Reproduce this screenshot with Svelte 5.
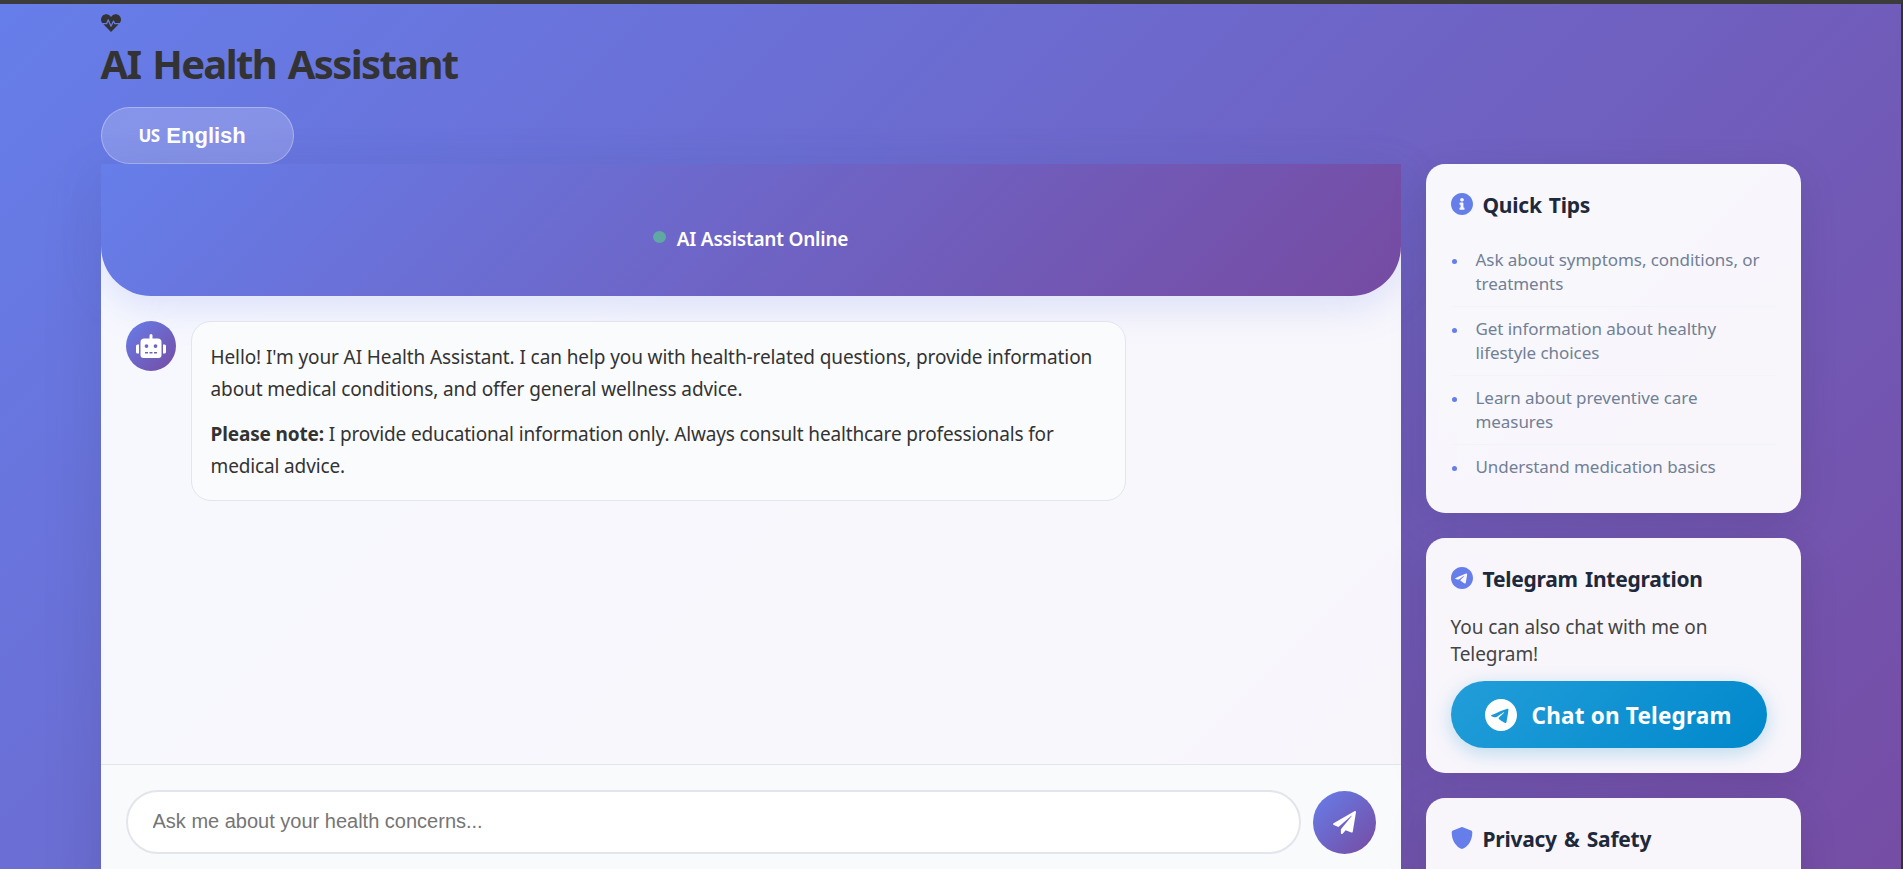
<script lang="ts">
  const ICONS = {
    heartbeat: {
      box: '0 0 512 512',
      d: 'M320.2 243.8l-49.7 99.4c-6 12.1-23.4 11.7-28.9-.6l-56.9-126.3-30 71.7H60.6l182.5 186.5c7.1 7.3 18.6 7.3 25.7 0L451.4 288H342.3l-22.1-44.2zM473.7 73.9l-2.4-2.5c-51.5-52.6-135.8-52.6-187.4 0L256 100l-27.9-28.5c-51.5-52.7-135.9-52.7-187.4 0l-2.4 2.4C-10.4 123.7-12.5 203 31 256h102.4l35.9-86.2c5.4-12.9 23.6-13.1 29.2-.4l58.2 129.3 49-97.9c5.9-11.8 22.7-11.8 28.6 0l27.6 55.2H481c43.5-53 41.4-132.3-7.3-182.1z',
    },
    robot: {
      box: '0 0 640 512',
      d: 'M32 224H64V416H32A32 32 0 0 1 0 384V256A32 32 0 0 1 32 224Zm512-48V448a64 64 0 0 1-64 64H160a64 64 0 0 1-64-64V176a80 80 0 0 1 80-80H288V32a32 32 0 0 1 64 0V96H464A80 80 0 0 1 544 176ZM264 256a40 40 0 1 0-40 40A40 40 0 0 0 264 256Zm-8 128H192v32h64Zm96 0H288v32h64ZM456 256a40 40 0 1 0-40 40A40 40 0 0 0 456 256Zm-8 128H384v32h64ZM640 256V384a32 32 0 0 1-32 32H576V224h32A32 32 0 0 1 640 256Z',
    },
    plane: {
      box: '0 0 512 512',
      d: 'M476 3.2L12.5 270.6c-18.1 10.4-15.8 35.6 2.2 43.2L121 358.4l287.3-253.2c5.5-4.9 13.3 2.6 8.6 8.3L176 407v80.5c0 23.6 28.5 32.9 42.5 15.8L282 426l124.6 52.2c14.2 6 30.4-2.9 33-18.2l72-432C515 7.8 493.3-6.8 476 3.2z',
    },
    info: {
      box: '8 8 496 496',
      d: 'M256 8C119.043 8 8 119.083 8 256c0 136.997 111.043 248 248 248s248-111.003 248-248C504 119.083 392.957 8 256 8zm0 110c23.196 0 42 18.804 42 42s-18.804 42-42 42-42-18.804-42-42 18.804-42 42-42zm56 254c0 6.627-5.373 12-12 12h-88c-6.627 0-12-5.373-12-12v-24c0-6.627 5.373-12 12-12h12v-64h-12c-6.627 0-12-5.373-12-12v-24c0-6.627 5.373-12 12-12h64c6.627 0 12 5.373 12 12v100h12c6.627 0 12 5.373 12 12v24z',
    },
    telegram: {
      box: '0 8 496 496',
      d: 'M248 8C111.033 8 0 119.033 0 256S111.033 504 248 504 496 392.967 496 256 384.967 8 248 8ZM362.952 176.66c-3.732 39.215-19.881 134.378-28.1 178.3-3.476 18.584-10.322 24.816-16.948 25.425-14.4 1.326-25.338-9.517-39.287-18.661-21.827-14.308-34.158-23.215-55.346-37.177-24.485-16.135-8.612-25 5.342-39.5 3.652-3.793 67.107-61.51 68.335-66.746.153-.655.3-3.1-1.154-4.384s-3.59-.849-5.135-.5q-3.283.746-104.608 69.142-14.845 10.194-26.894 9.934c-8.855-.191-25.888-5.006-38.551-9.123-15.531-5.048-27.875-7.717-26.8-16.291q.84-6.7 18.45-13.7 108.446-47.248 144.628-62.3c68.872-28.647 83.183-33.623 92.511-33.789 2.052-.034 6.639.474 9.61 2.885a10.452 10.452 0 0 1 3.53 6.716A43.765 43.765 0 0 1 362.952 176.66Z',
    },
    shield: {
      box: '8 0 496 512',
      d: 'M466.5 83.7l-192-80a48.15 48.15 0 0 0-36.9 0l-192 80C27.7 91.1 16 108.6 16 128c0 198.5 114.5 335.7 221.5 380.3 11.8 4.9 25.1 4.9 36.9 0C360.1 472.6 496 349.3 496 128c0-19.4-11.7-36.9-29.5-44.3z',
    },
  };

  const tips = [
    'Ask about symptoms, conditions, or treatments',
    'Get information about healthy lifestyle choices',
    'Learn about preventive care measures',
    'Understand medication basics',
  ];

  let message = $state('');
</script>

{#snippet icon(name: keyof typeof ICONS)}
  <svg class="icon {name}" viewBox={ICONS[name].box} aria-hidden="true">
    <path d={ICONS[name].d} />
  </svg>
{/snippet}

<div class="page">
  <div class="container">
    <header>
      {@render icon('heartbeat')}
      <h1>AI Health Assistant</h1>
      <button class="language"><span class="flag">US</span> English</button>
    </header>

    <div class="main">
      <section class="chat">
        <div class="chat-header">
          <span class="dot"></span>
          <span class="status">AI Assistant Online</span>
        </div>

        <div class="messages">
          <div class="avatar">{@render icon('robot')}</div>
          <div class="bubble">
            <p>
              Hello! I'm your AI Health Assistant. I can help you with health-related questions, provide information
              about medical conditions, and offer general wellness advice.
            </p>
            <p class="note">
              <strong>Please note:</strong> I provide educational information only. Always consult healthcare professionals for
              medical advice.
            </p>
          </div>
        </div>

        <div class="composer">
          <input type="text" placeholder="Ask me about your health concerns..." bind:value={message} />
          <button class="send" aria-label="Send">{@render icon('plane')}</button>
        </div>
      </section>

      <aside>
        <div class="card">
          <h3>{@render icon('info')}<span>Quick Tips</span></h3>
          <ul>
            {#each tips as tip}
              <li>{tip}</li>
            {/each}
          </ul>
        </div>

        <div class="card">
          <h3>{@render icon('telegram')}<span>Telegram Integration</span></h3>
          <p class="invite">You can also chat with me on Telegram!</p>
          <button class="telegram-link">{@render icon('telegram')}<span>Chat on Telegram</span></button>
        </div>

        <div class="card">
          <h3>{@render icon('shield')}<span>Privacy &amp; Safety</span></h3>
        </div>
      </aside>
    </div>
  </div>
</div>

<style>
  :global(body) {
    margin: 0;
    overflow: hidden;
  }

  .page {
    box-sizing: border-box;
    height: 869px;
    overflow: hidden;
    border-top: 4px solid #3c3c3c;
    border-right: 2px solid #333;
    background: linear-gradient(135deg, #667eea 0%, #764ba2 100%) 0 0 / 100% 960px no-repeat;
    color: #333;
    font-family: 'Segoe UI', 'Noto Sans', sans-serif;
    font-size: 19px;
  }

  .container {
    width: 1700px;
    margin: 0 auto;
    padding-top: 9px;
  }

  h1,
  h3,
  p,
  ul {
    margin: 0;
    padding: 0;
  }

  button {
    border: none;
    color: #fff;
    cursor: pointer;
  }

  .icon {
    display: block;
    flex-shrink: 0;
    fill: currentColor;
  }

  header {
    height: 151px;
  }

  .heartbeat {
    width: 20px;
    height: 20px;
  }

  h1 {
    margin-top: 4px;
    font-size: 40px;
    line-height: 54px;
    letter-spacing: -1.65px;
    word-spacing: 3px;
    font-weight: 700;
    white-space: nowrap;
  }

  .language {
    display: flex;
    align-items: center;
    gap: 7px;
    box-sizing: border-box;
    width: 193px;
    height: 57px;
    margin-top: 16px;
    padding: 0 37px;
    border: 1px solid rgba(255, 255, 255, 0.3);
    border-radius: 29px;
    background: rgba(255, 255, 255, 0.2);
    font-family: 'Liberation Sans', Arial, sans-serif;
    font-size: 22px;
    font-weight: 700;
  }

  .flag {
    font-family: 'Noto Sans', sans-serif;
    font-size: 17px;
    line-height: 20px;
    letter-spacing: -0.7px;
    font-weight: 700;
  }

  .main {
    display: grid;
    grid-template-columns: 1300px 375px;
    gap: 25px;
  }

  .chat {
    display: flex;
    flex-direction: column;
    height: 760px;
    background: rgba(255, 255, 255, 0.95);
    box-shadow: 0 20px 60px rgba(0, 0, 0, 0.1);
  }

  .chat-header {
    display: flex;
    align-items: center;
    justify-content: center;
    gap: 11px;
    box-sizing: border-box;
    height: 132px;
    padding-top: 18px;
    border-radius: 0 0 50px 50px;
    background: linear-gradient(135deg, #667eea 0%, #764ba2 100%);
    box-shadow: 0 10px 40px rgba(102, 126, 234, 0.2);
    color: #fff;
    font-weight: 600;
    letter-spacing: -0.22px;
  }

  .dot {
    width: 13px;
    height: 12px;
    margin-bottom: 4px;
    border-radius: 50%;
    background: #5fa8a4;
  }

  .messages {
    display: flex;
    align-items: flex-start;
    gap: 15px;
    box-sizing: border-box;
    height: 468px;
    padding: 25px;
  }

  .avatar,
  .send {
    display: flex;
    align-items: center;
    justify-content: center;
    flex-shrink: 0;
    border-radius: 50%;
    background: linear-gradient(135deg, #667eea, #764ba2);
    color: #fff;
  }

  .avatar {
    width: 50px;
    height: 50px;
  }

  .robot {
    width: 30px;
    height: 24px;
  }

  .bubble {
    box-sizing: border-box;
    width: 935px;
    padding: 19px 18px 18px 19px;
    border: 1px solid #e2e5eb;
    border-radius: 20px;
    background: #fafbfd;
    line-height: 32px;
    letter-spacing: -0.1px;
  }

  .note {
    margin-top: 13px;
    letter-spacing: -0.14px;
  }

  .composer {
    display: flex;
    gap: 12px;
    padding: 25px;
    border-top: 1px solid #e2e5eb;
    background: #f9fafc;
  }

  input {
    box-sizing: border-box;
    width: 1175px;
    height: 64px;
    padding: 0 25px 2px;
    border: 2px solid #e2e5eb;
    border-radius: 32px;
    outline: none;
    background: #fff;
    font-family: 'Liberation Sans', Arial, sans-serif;
    font-size: 20px;
  }

  input::placeholder {
    color: #757575;
  }

  .send {
    width: 63px;
    height: 63px;
    margin-top: 1px;
    padding: 0;
  }

  .plane {
    width: 23px;
    height: 23px;
  }

  aside {
    display: flex;
    flex-direction: column;
    gap: 25px;
  }

  .card {
    padding: 25px;
    border-radius: 19px;
    background: rgba(255, 255, 255, 0.95);
    box-shadow: 0 10px 40px rgba(0, 0, 0, 0.1);
  }

  .card:last-child {
    height: 100px;
  }

  h3 {
    display: flex;
    gap: 10px;
    height: 48px;
    color: #1e293b;
    font-size: 21px;
    line-height: 32px;
    letter-spacing: -0.25px;
    word-spacing: 2px;
    font-weight: 700;
    white-space: nowrap;
  }

  h3 .icon {
    width: 22px;
    height: 22px;
    margin-top: 4px;
    color: #667eea;
  }

  ul {
    list-style: none;
  }

  li {
    position: relative;
    top: 1px;
    padding: 10px 0 10px 25px;
    border-bottom: 1px solid #f3f4f7;
    color: #718096;
    font-size: 17px;
    line-height: 24px;
    letter-spacing: -0.06px;
  }

  li:last-child {
    border-bottom: none;
  }

  li::before {
    content: '';
    position: absolute;
    top: 21px;
    left: 1px;
    width: 5px;
    height: 5px;
    border-radius: 50%;
    background: #667eea;
  }

  .invite {
    margin-top: 3px;
    color: #444;
    line-height: 27px;
    letter-spacing: -0.07px;
  }

  .telegram-link {
    display: flex;
    align-items: center;
    gap: 15px;
    width: 316px;
    height: 67px;
    margin-top: 13px;
    padding: 0 34px;
    border-radius: 34px;
    background: linear-gradient(135deg, #229ed9, #0088cc);
    box-shadow: 0 5px 19px rgba(0, 136, 204, 0.25);
    font-family: inherit;
    font-size: 22.5px;
    letter-spacing: 0.2px;
    font-weight: 700;
    white-space: nowrap;
  }

  .telegram-link span {
    padding-top: 2px;
  }

  .telegram-link .icon {
    width: 32px;
    height: 32px;
  }
</style>
